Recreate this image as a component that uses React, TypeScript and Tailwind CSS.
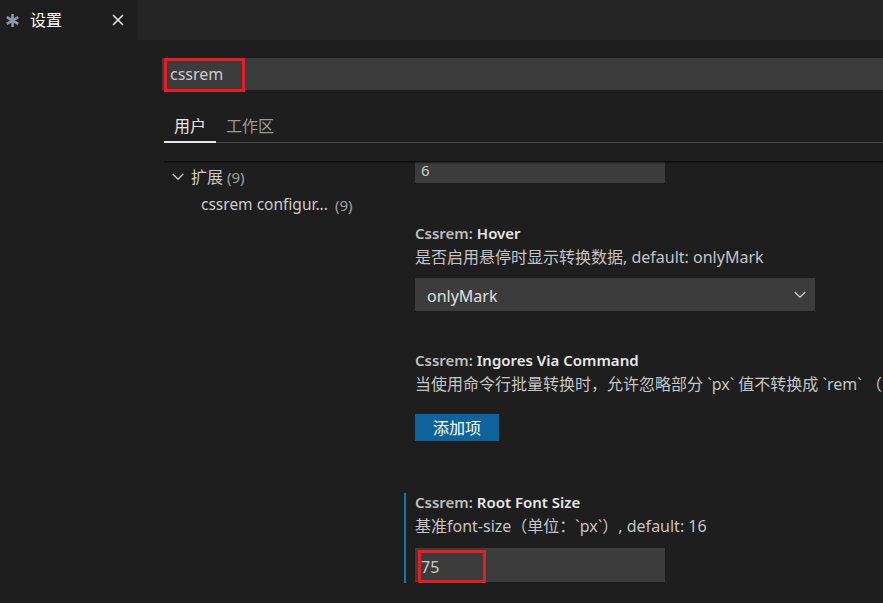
import React from "react";

const font = { fontFamily: '"Noto Sans", "Noto Sans CJK SC", sans-serif' };

function Asterisk() {
  return (
    <svg width="13" height="13" viewBox="0 0 13 13" className="shrink-0">
      <g stroke="#8a9cab" strokeWidth="2.6" strokeLinecap="butt">
        <line x1="6.5" y1="0" x2="6.5" y2="13" />
        <line x1="0.8" y1="3.2" x2="12.2" y2="9.8" />
        <line x1="0.8" y1="9.8" x2="12.2" y2="3.2" />
      </g>
    </svg>
  );
}

function Close() {
  return (
    <svg width="12" height="12" viewBox="0 0 12 12">
      <g stroke="#e8e8e8" strokeWidth="1.6">
        <line x1="1" y1="1" x2="11" y2="11" />
        <line x1="11" y1="1" x2="1" y2="11" />
      </g>
    </svg>
  );
}

function Chevron({ color = "#c5c5c5" }: { color?: string }) {
  return (
    <svg width="12" height="8" viewBox="0 0 12 8">
      <polyline points="0.8,1 6,6.2 11.2,1" fill="none" stroke={color} strokeWidth="1.4" />
    </svg>
  );
}

function Title({ k }: { k: string }) {
  return (
    <div className="h-[18px] leading-[18px] text-[15px] font-semibold whitespace-nowrap">
      <span className="text-[#bdbdbd]">Cssrem: </span>
      <span className="text-[#e7e7e7]">{k}</span>
    </div>
  );
}

function Desc({ children }: { children: React.ReactNode }) {
  return (
    <div className="mt-[3px] h-[24px] leading-[24px] text-[16px] text-[#c4c4c4] whitespace-nowrap">
      {children}
    </div>
  );
}

export default function App() {
  return (
    <div className="w-[883px] h-[603px] bg-[#1e1e1e] overflow-hidden flex flex-col" style={font}>
      {/* Tab bar */}
      <div className="h-[40px] shrink-0 flex bg-[#252526]">
        <div className="w-[138px] bg-[#1e1e1e] flex items-center pl-[6px]">
          <Asterisk />
          <span className="ml-[11px] text-[16px] text-white leading-none">设置</span>
          <span className="ml-auto mr-[14px] flex items-center">
            <Close />
          </span>
        </div>
      </div>

      <div className="flex-1 flex flex-col pl-[162px] min-h-0">
        {/* Search */}
        <div className="mt-[18px] h-[32px] shrink-0 bg-[#3c3c3c] relative flex items-center">
          <span className="pl-[8px] text-[16px] text-[#cccccc]">cssrem</span>
          <div className="absolute left-[2px] top-0 w-[81px] h-[34px] border-[3px] border-[#e81c24]" />
        </div>

        {/* Tabs */}
        <div className="ml-[2px] mt-[20px] h-[33px] shrink-0 flex items-stretch border-b border-[#4a4a4a] relative">
          <div className="px-[10px] flex items-center text-[16px] text-[#e7e7e7] relative">
            用户
            <div className="absolute left-0 right-0 bottom-[-1px] h-[2px] bg-[#e7e7e7]" />
          </div>
          <div className="px-[10px] flex items-center text-[16px] text-[#9a9a9a]">工作区</div>
        </div>

        {/* Content */}
        <div className="ml-[2px] mt-[18px] flex-1 flex min-h-0 relative overflow-hidden">
          <div className="absolute left-0 right-0 top-0 h-[3px] bg-gradient-to-b from-[#0b0b0b] to-transparent z-10" />
          {/* TOC */}
          <div className="w-[240px] shrink-0 pt-[4px]">
            <div className="h-[24px] flex items-center pl-[8px]">
              <Chevron />
              <span className="ml-[7px] text-[16px] text-[#cccccc]">扩展</span>
              <span className="ml-[4px] text-[15px] text-[#a0a0a0]">(9)</span>
            </div>
            <div className="h-[24px] mt-[4px] flex items-center pl-[37px] whitespace-nowrap">
              <span className="text-[15.5px] text-[#cccccc]">cssrem configur...</span>
              <span className="ml-[7px] text-[15px] text-[#a0a0a0]">(9)</span>
            </div>
          </div>

          {/* Settings list */}
          <div className="flex-1 min-w-0 flex flex-col">
            <div className="pl-[11px] mt-[-4px]">
              <div className="w-[250px] h-[26px] bg-[#3c3c3c] flex items-center pl-[6px] text-[15px] text-[#cccccc]">
                6
              </div>
            </div>

            <div className="pl-[11px] mt-[41px]">
              <Title k="Hover" />
              <Desc>是否启用悬停时显示转换数据, default: onlyMark</Desc>
              <div className="mt-[9px] w-[400px] h-[33px] bg-[#3c3c3c] flex items-center pl-[12px] pr-[9px]">
                <span className="text-[16px] text-[#e0e0e0] pt-[3px]">onlyMark</span>
                <span className="ml-auto flex items-center">
                  <Chevron />
                </span>
              </div>
            </div>

            <div className="pl-[11px] mt-[40px]">
              <Title k="Ingores Via Command" />
              <Desc>当使用命令行批量转换时，允许忽略部分 `px` 值不转换成 `rem` （如</Desc>
              <div className="mt-[18px] w-[84px] h-[27px] bg-[#0e639c] flex items-center justify-center text-[16px] text-white">
                添加项
              </div>
            </div>

            <div className="mt-[52px] border-l-2 border-[#0c7d9d] pl-[9px] pb-[1px]">
              <Title k="Root Font Size" />
              <Desc>基准font-size（单位：`px`）, default: 16</Desc>
              <div className="mt-[10px] w-[250px] h-[34px] bg-[#3c3c3c] relative flex items-center pl-[6px] pt-[3px] text-[16px] text-[#cccccc]">
                75
                <div className="absolute left-[3px] top-[2px] w-[68px] h-[33px] border-[3px] border-[#e81c24]" />
              </div>
            </div>
          </div>
        </div>
      </div>
    </div>
  );
}
